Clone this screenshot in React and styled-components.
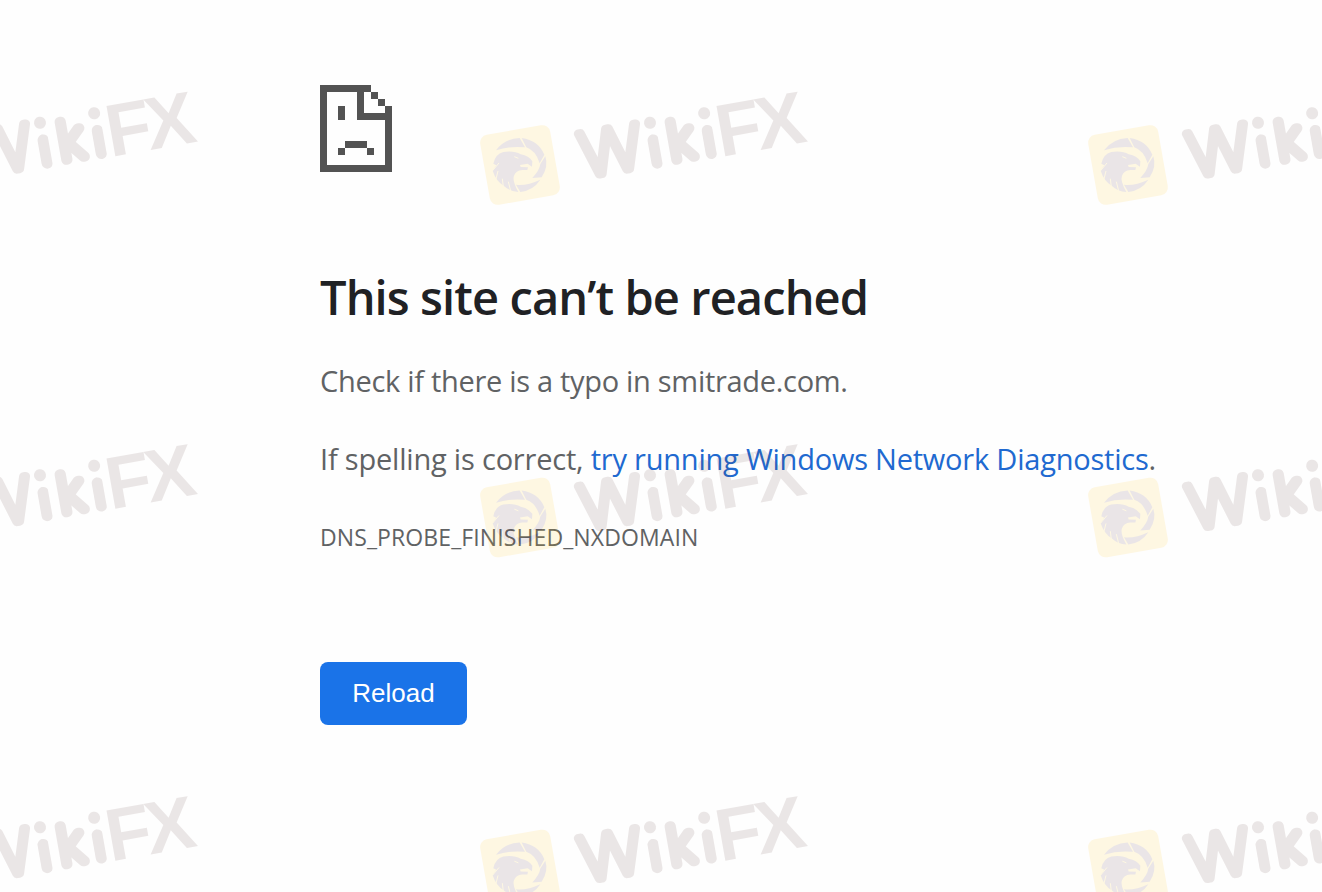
import React from 'react';
import styled, { createGlobalStyle } from 'styled-components';

const GlobalStyle = createGlobalStyle`
  * {
    box-sizing: border-box;
  }
  body {
    margin: 0;
    background-color: #fefefe;
    overflow: hidden;
  }
`;

const Page = styled.div`
  position: relative;
  height: 892px;
  overflow: hidden;
  font-family: "Segoe UI", "Open Sans", "Noto Sans", sans-serif;
  color: #606264;
`;

const Main = styled.main`
  display: flex;
  flex-direction: column;
  align-items: flex-start;
  padding: 85px 0 0 320px;
`;

const PageIcon = styled.svg`
  display: block;
  width: 72px;
  height: 87px;
  fill: #535353;
`;

const Title = styled.h1`
  margin: 93px 0 0;
  font-size: 47px;
  font-weight: 600;
  line-height: 64px;
  letter-spacing: -0.9px;
  white-space: nowrap;
  color: #202124;
`;

const Text = styled.p`
  margin: ${props => props.$top}px 0 0;
  font-size: 29px;
  line-height: 40px;
  letter-spacing: ${props => props.$spacing}px;
  white-space: nowrap;
`;

const Link = styled.a`
  color: #2069d0;
  letter-spacing: -0.22px;
  text-decoration: none;
`;

const ErrorCode = styled.div`
  margin-top: 42px;
  font-size: 23px;
  line-height: 32px;
  letter-spacing: 0.1px;
  white-space: nowrap;
`;

const Button = styled.button`
  margin: 109px 0 0;
  padding: 0 0 1px;
  width: 147px;
  height: 63px;
  border: none;
  border-radius: 8px;
  background-color: #1a73e8;
  color: #ffffff;
  font-family: Arial, "Liberation Sans", sans-serif;
  font-size: 26px;
`;

const Overlay = styled.svg`
  position: absolute;
  top: 0;
  left: 0;
  pointer-events: none;
`;

const SadPage = () => (
  <PageIcon viewBox="0 0 72 87" shapeRendering="crispEdges">
    <path d="M0 0H51V7H44V28H65V21H72V87H0ZM7 7V80H65V35H37V7Z" fillRule="evenodd"/>
    <path d="M51 7h7v7h7v7h-7v-7h-7z"/>
    <path d="M18 21h7v14h-7z"/>
    <path d="M25 56h22v7h-22zM18 63h7v7h-7zM47 63h7v7h-7z"/>
  </PageIcon>
);

const INK = '#64403e';

const Eagle = () => (
  <g transform="translate(-50 -85) scale(0.3333)">
    <g fill="#603c48">
      <path d="M78 211Q104 176 149 174L165 202Q120 197 78 211Z"/>
      <path d="M155 174Q205 181 223 224L209 250Q198 212 169 202Z"/>
      <path d="M226 229Q236 260 215 292L187 294Q209 270 211 252Z"/>
      <path d="M138 314Q170 318 211 299Q190 331 151 336Z"/>
      <path d="M70 251Q76 222 100 216Q132 211 152 223Q177 228 187 244L186 260L173 251L150 255L152 261L174 262L172 270L157 270Q137 272 132 287Q126 302 145 336Q119 334 101 317Q78 303 68 272L79 256Z"/>
    </g>
    <g fill="none" stroke="#ffc81f" strokeWidth="3">
      <path d="M67 273L87 249M77 301L84 273M100 321L97 296M122 333L115 305M133 230l12 5"/>
    </g>
  </g>
);

const Mark = ({ x, y }) => (
  <g transform={`translate(${x} ${y})`} opacity="0.12">
    <rect x="-35.5" y="-35.5" width="71" height="71" rx="8" fill="#ffc81f" transform="rotate(-10)"/>
    <Eagle/>
    <g transform="translate(0 1) rotate(-10)" fill={INK}>
      <g
        fontFamily="Inter, sans-serif"
        fontWeight="100"
        stroke={INK}
        strokeWidth="10"
        strokeLinejoin="round"
        strokeLinecap="round"
      >
        <text x="61" y="22" fontSize="60" strokeWidth="8.5" textLength="62" lengthAdjust="spacingAndGlyphs">W</text>
        <text x="129" y="22" fontSize="58" clipPath="url(#stem-left)">i</text>
        <text x="150" y="21" fontSize="53">k</text>
        <text x="184" y="22" fontSize="58" clipPath="url(#stem-right)">i</text>
      </g>
      <circle cx="135.5" cy="-20" r="6"/>
      <circle cx="190.5" cy="-20" r="6"/>
      <text x="199" y="26" fontFamily="Arial, Liberation Sans, sans-serif" fontWeight="700" fontSize="74">F</text>
      <text x="239" y="26" fontFamily="Arial, Liberation Sans, sans-serif" fontWeight="700" fontSize="74">X</text>
    </g>
  </g>
);

const columns = [-90, 520, 1128];
const rows = [165, 517.5, 869.5];

const Watermark = () => (
  <Overlay width="1322" height="892" aria-hidden="true">
    <clipPath id="stem-left">
      <rect x="130" y="-8" width="11.5" height="34.5" rx="5.7"/>
    </clipPath>
    <clipPath id="stem-right">
      <rect x="185" y="-8" width="11.5" height="34.5" rx="5.7"/>
    </clipPath>
    {rows.map(y => columns.map(x => <Mark key={`${x}-${y}`} x={x} y={y}/>))}
  </Overlay>
);

const App = () => (
  <Page>
    <GlobalStyle/>
    <Main>
      <SadPage/>
      <Title>This site can’t be reached</Title>
      <Text $top={32} $spacing={-0.3}>Check if there is a typo in smitrade.com.</Text>
      <Text $top={38} $spacing={-0.2}>
        If spelling is correct, <Link href="#">try running Windows Network Diagnostics</Link>.
      </Text>
      <ErrorCode>DNS_PROBE_FINISHED_NXDOMAIN</ErrorCode>
      <Button type="button">Reload</Button>
    </Main>
    <Watermark/>
  </Page>
);

export default App;
